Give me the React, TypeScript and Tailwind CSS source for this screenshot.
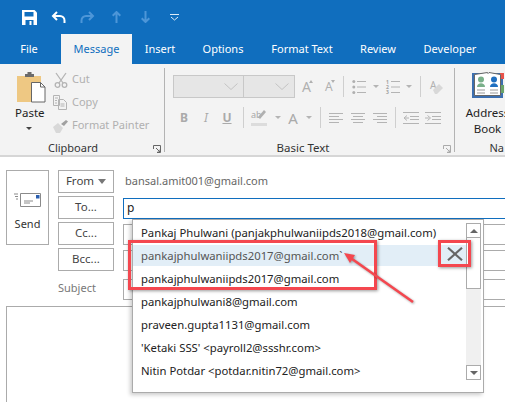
import React from "react";

const font = { fontFamily: '"Noto Sans", "Open Sans", sans-serif' };

function Ico({ children, w = 14, h = 14, cls = "" }: { children: React.ReactNode; w?: number; h?: number; cls?: string }) {
  return (
    <svg width={w} height={h} viewBox={`0 0 ${w} ${h}`} fill="none" stroke="#b4b4b4" strokeWidth="1" className={`shrink-0 ${cls}`}>
      {children}
    </svg>
  );
}

function Bullets({ cls }: { cls: string }) {
  return (
    <Ico cls={cls} h={16}>
      <circle cx="1.800" cy="2.500" r="1.500" fill="#b0b0b0" stroke="none" />
      <circle cx="1.800" cy="8" r="1.500" fill="#b0b0b0" stroke="none" />
      <circle cx="1.800" cy="13.500" r="1.500" fill="#b0b0b0" stroke="none" />
      <path d="M5 2.500h9M5 8h9M5 13.500h9" />
    </Ico>
  );
}

function Numbers({ cls }: { cls: string }) {
  return (
    <div className={`flex h-[16px] w-[14px] shrink-0 ${cls}`}>
      <div className="w-[5px] shrink-0 pt-[1px] text-[5px] font-bold leading-[5px] text-[#a0a0a0]">
        <div>1</div>
        <div>2</div>
        <div>3</div>
      </div>
      <Ico w={9} h={16}><path d="M0 2.500h9M0 8h9M0 13.500h9" /></Ico>
    </div>
  );
}

function Align({ kind, cls }: { kind: "l" | "c" | "r"; cls: string }) {
  const d =
    kind === "l"
      ? "M0 1.500h14M0 4.500h10M0 7.500h14M0 10.500h10"
      : kind === "c"
        ? "M0 1.500h14M2 4.500h10M0 7.500h14M2 10.500h10"
        : "M0 1.500h14M4 4.500h10M0 7.500h14M4 10.500h10";
  return <Ico cls={cls} h={12}><path d={d} /></Ico>;
}

function Launcher({ color = "#666" }: { color?: string }) {
  return (
    <svg width="8" height="8" viewBox="0 0 8 8" fill="none" stroke={color} strokeWidth="1">
      <path d="M.5 4V.5H7.500V7.500H4M3 3l4 4M7 4.500V7H4.500" />
    </svg>
  );
}

function Btn({ children }: { children: React.ReactNode }) {
  return (
    <div className="flex h-[23px] w-[56px] shrink-0 items-center justify-center border border-[#ababab] bg-white pb-[1px] text-[11.500px] text-[#444]">
      {children}
    </div>
  );
}

function Field({ active, children }: { active?: boolean; children?: React.ReactNode }) {
  return (
    <div className={`h-[21px] flex-1 border border-r-0 ${active ? "border-[#106ebe]" : "border-[#ababab]"} bg-white pl-[3px] text-[12px] leading-[18px] text-[#222]`}>
      {children}
    </div>
  );
}

const rows = [
  "Pankaj Phulwani (panjakphulwaniipds2018@gmail.com)",
  "pankajphulwaniipds2017@gmail.com`",
  "pankajphulwaniipds2017@gmail.com",
  "pankajphulwani8@gmail.com",
  "praveen.gupta1131@gmail.com",
  "'Ketaki SSS' <payroll2@ssshr.com>",
  "Nitin Potdar <potdar.nitin72@gmail.com>",
];

const Chevron = () => (
  <svg width="14" height="7" viewBox="0 0 14 7" fill="none" stroke="#c4c4c4"><path d="m.5 .5 6.500 6 6.500-6" /></svg>
);

const Caret = ({ cls }: { cls: string }) => (
  <div className={`h-0 w-0 shrink-0 border-x-[3px] border-t-[3px] border-x-transparent border-t-[#b4b4b4] ${cls}`} />
);

const Sep = ({ cls }: { cls: string }) => <div className={`w-px shrink-0 self-stretch bg-[#cfcfcf] ${cls}`} />;

export default function App() {
  return (
    <div style={font} className="relative h-[402px] w-[505px] overflow-hidden bg-white">
      {/* Title bar */}
      <div className="flex h-[34px] items-center bg-[#106ebe] pl-[22px]">
        <svg width="15" height="15" viewBox="0 0 15 15" className="shrink-0"><path d="M0 0h12.500L15 2.500V15H0z" fill="#fff" /><path d="M2.500 2h9v4.500h-9z" fill="#106ebe" /><path d="M3.500 10h8v5h-8z" fill="#106ebe" /><path d="M7.500 11h2v4h-2z" fill="#fff" /></svg>
        <svg width="15" height="13" viewBox="0 0 15 13" fill="none" stroke="#fff" strokeWidth="2" className="ml-[14px] shrink-0"><path d="M6 1 2 5l4 4M2 5h7a4.500 4.500 0 0 1 4.500 4.500V12" /></svg>
        <svg width="15" height="13" viewBox="0 0 15 13" fill="none" stroke="#4d96d8" strokeWidth="2" className="ml-[14px] shrink-0"><path d="m9 1 4 4-4 4M13 5H6a4.500 4.500 0 0 0-4.500 4.500V12" /></svg>
        <svg width="9" height="12" viewBox="0 0 9 12" fill="none" stroke="#4d96d8" strokeWidth="2" className="ml-[17px] shrink-0"><path d="M.7 4.800 4.500 1l3.800 3.800M4.500 1v11" /></svg>
        <svg width="9" height="12" viewBox="0 0 9 12" fill="none" stroke="#4d96d8" strokeWidth="2" className="ml-[20px] shrink-0"><path d="M.7 7.200 4.500 11l3.800-3.800M4.500 11V0" /></svg>
        <svg width="9" height="7" viewBox="0 0 9 7" fill="none" stroke="#dcebf7" strokeWidth="1" className="ml-[20px] shrink-0"><path d="M0 .5h9M1 3l3.500 3L8 3" /></svg>
      </div>
      {/* Tabs */}
      <div className="flex h-[30px] items-center bg-[#106ebe] text-center text-[11px] text-white">
        <div className="w-[59px] shrink-0 pr-[1px]">File</div>
        <div className="ml-[2px] flex h-[30px] w-[71px] shrink-0 items-center justify-center bg-[#f3f3f3] text-[#106ebe]">Message</div>
        <div className="w-[56px] shrink-0">Insert</div>
        <div className="w-[70px] shrink-0">Options</div>
        <div className="w-[88px] shrink-0">Format Text</div>
        <div className="w-[64px] shrink-0">Review</div>
        <div className="w-[80px] shrink-0">Developer</div>
      </div>
      {/* Ribbon */}
      <div className="flex h-[93px] items-start border-b-2 border-[#d6d6d6] bg-[#f3f3f3] pt-[4px]">
        {/* Clipboard */}
        <div className="flex h-[84px] w-[165px] shrink-0 flex-col border-r border-[#b3b3b3]">
          <div className="flex h-[76px] shrink-0">
            <div className="ml-[15px] w-[28px] shrink-0 text-center">
              <svg width="29" height="31" viewBox="0 0 29 31" className="ml-[2px] mt-[4px] block">
                <path d="M0 4h24v26H0z" fill="#eec883" />
                <path d="M8 5V2h2.500V0h4v2H17v3z" fill="#6b6b6b" />
                <path d="M14.500 10.500h9l4.500 4.500v15H14.500z" fill="#fff" stroke="#666" />
                <path d="M23.500 10.500V15H28" fill="none" stroke="#666" />
              </svg>
              <div className="mt-[2px] text-[11.500px] leading-[16px] text-[#222]">Paste</div>
              <div className="mx-auto mt-[6px] h-0 w-0 border-x-[3px] border-t-[3px] border-x-transparent border-t-[#444]" />
            </div>
            <div className="ml-[10px] flex flex-col text-[11px] text-[#b0b0b0]">
              <div className="flex h-[23px] items-center gap-[3px]">
                <svg width="16" height="16" viewBox="0 0 16 16" fill="none" stroke="#b4b4b4" strokeWidth="1.300" className="shrink-0"><path d="m3 1 7 10M13 1 6 11" /><circle cx="4.500" cy="13" r="2.300" /><circle cx="11.500" cy="13" r="2.300" /></svg>
                Cut
              </div>
              <div className="flex h-[23px] items-center gap-[3px]">
                <svg width="16" height="15" viewBox="0 0 16 15" fill="none" stroke="#b4b4b4" className="shrink-0"><path d="M.5.5h6v10h-6zM5.500 4.500h5l3 3v7h-8zM2 3h3M2 5.500h2M2 8h2M7.500 9h4M7.500 11h4" /></svg>
                Copy
              </div>
              <div className="flex h-[23px] items-center gap-[3px]">
                <svg width="16" height="14" viewBox="0 0 16 14" className="shrink-0"><path d="M0 8 5 4l5 5-3 5H3z" fill="#d8d8d8" /><path d="m8 5 5-4 2 1.500L11 7z" fill="#a0a0a0" /></svg>
                <span className="whitespace-nowrap">Format Painter</span>
              </div>
            </div>
          </div>
          <div className="relative h-[8px] pr-[18px] text-center text-[11px] leading-[8px] text-[#333]">
            Clipboard
            <div className="absolute right-[3px] top-[1px] flex"><Launcher /></div>
          </div>
        </div>
        {/* Basic Text */}
        <div className="flex h-[84px] w-[290px] shrink-0 flex-col border-r border-[#b3b3b3] pl-[8px]">
          <div className="h-[76px] shrink-0 pt-[7px]">
            <div className="flex h-[23px] items-center">
              <div className="flex h-[23px] w-[71px] shrink-0 items-center justify-end border border-[#c8c8c8] bg-[#e6e6e6] pr-[5px]"><Chevron /></div>
              <div className="flex h-[23px] w-[51px] shrink-0 items-center justify-end border border-l-0 border-[#c8c8c8] bg-[#e6e6e6] pr-[5px]"><Chevron /></div>
              <div className="ml-[7px] flex w-[12px] shrink-0 items-start text-[14px] leading-[18px] text-[#b0b0b0]">
                A<div className="-ml-[2px] mt-[2px] h-0 w-0 border-x-[2.500px] border-b-[3px] border-x-transparent border-b-[#b0b0b0]" />
              </div>
              <div className="ml-[11px] flex w-[11px] shrink-0 items-start text-[12px] leading-[18px] text-[#b0b0b0]">
                A<div className="-ml-[2px] mt-[2px] h-0 w-0 border-x-[2.500px] border-t-[3px] border-x-transparent border-t-[#b0b0b0]" />
              </div>
              <div className="ml-[7px] h-[21px] w-px shrink-0 bg-[#cfcfcf]" />
              <Bullets cls="ml-[8px]" />
              <Caret cls="ml-[7px]" />
              <Numbers cls="ml-[7px]" />
              <Caret cls="ml-[6px]" />
              <div className="ml-[8px] h-[21px] w-px shrink-0 bg-[#cfcfcf]" />
              <div className="ml-[9px] flex w-[15px] shrink-0 items-start text-[10px] leading-[13px] text-[#b0b0b0]">
                A
                <svg width="10" height="11" viewBox="0 0 10 11" className="-ml-[3px] mt-[4px] shrink-0"><path d="m0 7 6-6 4 4-6 6H2z" fill="#d8d8d8" /></svg>
              </div>
            </div>
            <div className="mt-[9px] flex h-[21px] items-center text-[12px] text-[#aaa]">
              <div className="ml-[7px] w-[8px] shrink-0 text-center font-bold">B</div>
              <div className="ml-[14px] w-[8px] shrink-0 text-center italic">I</div>
              <div className="ml-[12px] w-[10px] shrink-0 text-center font-bold underline">U</div>
              <Sep cls="ml-[11px]" />
              <div className="ml-[7px] flex h-[17px] w-[16px] shrink-0 flex-col border-b-[3px] border-[#dcdcdc] text-[9px] leading-[12px] text-[#a8a8a8]">
                <div className="flex">
                  ab
                  <svg width="8" height="11" viewBox="0 0 8 11" className="-ml-[4px] shrink-0"><path d="m0 8 6-7 2 2-6 7z" fill="#b0b0b0" /></svg>
                </div>
              </div>
              <Caret cls="ml-[8px]" />
              <div className="ml-[7px] w-[10px] shrink-0 text-center text-[15px] leading-[20px]">A</div>
              <Caret cls="ml-[8px]" />
              <Sep cls="ml-[8px]" />
              <Align kind="l" cls="ml-[8px]" />
              <Align kind="c" cls="ml-[8px]" />
              <Align kind="r" cls="ml-[8px]" />
              <Sep cls="ml-[8px]" />
              <Ico w={16} h={12} cls="ml-[7px]"><path d="M0 .5h16M7 4.500h9M7 7.500h9M0 11.500h16M6 6H2M4 3.500 1 6l3 2.500" /></Ico>
              <Ico w={16} h={12} cls="ml-[6px]"><path d="M0 .5h16M7 4.500h9M7 7.500h9M0 11.500h16M0 6h4M2.500 3.500 5.500 6l-3 2.500" /></Ico>
            </div>
          </div>
          <div className="relative h-[8px] pr-[21px] text-center text-[11.500px] leading-[8px] text-[#333]">
            Basic Text
            <div className="absolute right-[3px] top-[1px] flex"><Launcher color="#aaa" /></div>
          </div>
        </div>
        {/* Names */}
        <div className="w-[50px] shrink-0 overflow-hidden">
          <div className="ml-[10px] flex w-[45px] flex-col items-center">
            <svg width="32" height="27" viewBox="0 0 32 27" className="mt-[4px] shrink-0">
              <path d="M0 1h31v25H0z" fill="#3c6fb0" />
              <path d="M28 1h4v6h-4z" fill="#e8524a" />
              <path d="M28 13h4v8h-4z" fill="#6aa56a" />
              <path d="M2.500 2.500 15.500.5 16 1.500l1-1 11.500 2v21h-26z" fill="#fff" stroke="#666" />
              <circle cx="9" cy="7.500" r="3" fill="#7ab08a" /><path d="M5 15c0-5 8-5 8 0z" fill="#7ab08a" />
              <circle cx="22" cy="7.500" r="3" fill="#1f6fc0" /><path d="M18 15c0-5 8-5 8 0z" fill="#1f6fc0" />
              <path d="M5 18h8M5 21h8M18 18h8M18 21h8" stroke="#999" />
            </svg>
            <div className="mt-[6px] whitespace-nowrap text-[11.500px] leading-[16px] text-[#222]">Address</div>
            <div className="text-[11.500px] leading-[16px] text-[#222]">Book</div>
            <div className="mt-[3px] w-[28px] translate-x-[16px] text-[11px] leading-[16px] text-[#333]">Na</div>
          </div>
        </div>
      </div>
      {/* Compose */}
      <div className="flex gap-[9px] pl-[6px] pt-[13px]">
        <div className="flex h-[75px] w-[43px] shrink-0 flex-col items-center border border-[#ababab] pt-[22px]">
          <svg width="27" height="14" viewBox="0 0 27 14" fill="none" stroke="#8a8a8a" className="shrink-0">
            <path d="M6.500.5h20v13h-20z" />
            <path d="M0 1h4M1 3.500h3M2 6h2" />
            <path d="M10 8h9M10 10h6" />
            <path d="M22 2h3.500v3.500H22z" fill="#2b5fb0" stroke="none" />
          </svg>
          <div className="mt-[9px] text-[11px] leading-[16px] text-[#333]">Send</div>
        </div>
        <div className="flex flex-1 flex-col gap-[3px]">
          <div className="flex h-[23px] items-center gap-[9px]">
            <Btn>From <span className="ml-[4px] h-0 w-0 border-x-[4.500px] border-t-[5px] border-x-transparent border-t-[#777]" /></Btn>
            <span className="ml-[2px] text-[11px] text-[#666]">bansal.amit001@gmail.com</span>
          </div>
          <div className="flex items-end gap-[9px]"><Btn>To...</Btn><Field active>p</Field></div>
          <div className="flex items-end gap-[9px]"><Btn>Cc...</Btn><Field /></div>
          <div className="flex items-end gap-[9px]"><Btn>Bcc...</Btn><Field /></div>
          <div className="mt-[3px] flex h-[23px] items-end gap-[9px]">
            <div className="h-[21px] w-[56px] shrink-0 text-[11px] leading-[17px] text-[#777]">Subject</div>
            <Field />
          </div>
        </div>
      </div>
      <div className="ml-[6px] mt-[6px] h-[110px] border border-r-0 border-[#ababab] bg-white" />

      {/* Autocomplete popup */}
      <div className="absolute left-[132px] top-[219px] flex h-[174px] w-[352px] border border-[#ababab] bg-white shadow-[-2px_2px_4px_rgba(0,0,0,0.2)]">
        <div className="flex-1 pt-[2px]">
          {rows.map((r, i) => (
            <div key={i} className="h-[23px] whitespace-nowrap text-[11.300px]">
              <div className={`pl-[8px] leading-[21px] ${i === 1 ? "h-[21px] bg-[#e2eef7] text-[#555]" : "text-[#222]"}`}>{r}</div>
            </div>
          ))}
        </div>
        <div className="mr-[2px] mt-[3px] flex h-[157px] w-[15px] shrink-0 flex-col bg-[#f0f0f0]">
          <div className="flex h-[15px] items-center justify-center border border-[#ababab] bg-white"><div className="h-0 w-0 border-x-[4px] border-b-[4px] border-x-transparent border-b-[#666]" /></div>
          <div className="h-[51px] border border-t-0 border-[#ababab] bg-white" />
          <div className="flex-1" />
          <div className="flex h-[15px] items-center justify-center border border-[#ababab] bg-white"><div className="h-0 w-0 border-x-[4px] border-t-[4px] border-x-transparent border-t-[#666]" /></div>
        </div>
      </div>

      {/* Annotations */}
      <div className="absolute left-[128px] top-[240px] h-[50px] w-[249px] border-[3px] border-[#f4474f] shadow-[1px_1px_3px_rgba(0,0,0,0.4)]" />
      <div className="absolute left-[438px] top-[240px] flex h-[27px] w-[33px] items-center justify-center border-[3px] border-[#f4474f] shadow-[1px_1px_3px_rgba(0,0,0,0.4)]">
        <svg width="16" height="14" viewBox="0 0 16 14" fill="none" stroke="#666" strokeWidth="2.200"><path d="m1 .8 14 12.400M15 .8 1 13.200" /></svg>
      </div>
      <svg width="80" height="60" viewBox="0 0 80 60" className="absolute left-[340px] top-[248px]" style={{ filter: "drop-shadow(1px 1px 1px rgba(0,0,0,0.35))" }}>
        <path d="M73 54 10 9.500" stroke="#f4474f" strokeWidth="2.600" fill="none" />
        <path d="M4 5 15 7 10 15z" fill="#f4474f" />
      </svg>
    </div>
  );
}
